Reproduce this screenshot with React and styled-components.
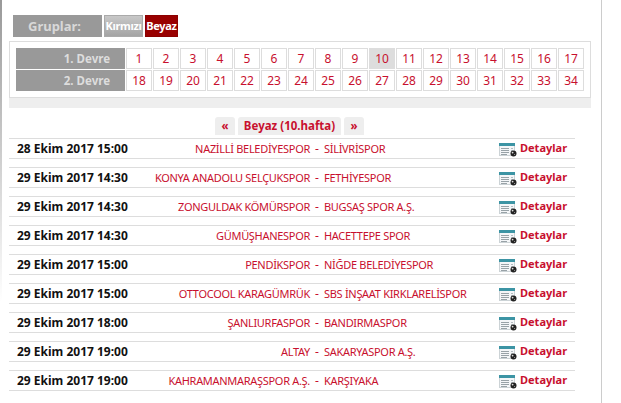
import React from 'react';
import styled, { createGlobalStyle } from 'styled-components';

const Global = createGlobalStyle`
  html, body {
    margin: 0;
    padding: 0;
    background: #fff;
  }
  body {
    width: 621px;
    height: 403px;
    overflow: hidden;
    font-family: "Noto Sans", Tahoma, sans-serif;
    font-size: 12px;
  }
`;

const Page = styled.div`
  width: 602px;
  height: 403px;
  box-sizing: border-box;
  border-right: 1px solid #ccc;
  padding: 15px 0 0 9px;
  background: linear-gradient(to bottom, #999, #fff 75%) no-repeat 0 0 / 2px 100%;
`;

const Groups = styled.div`
  display: flex;
  gap: 2px;
  margin-left: 4px;
  height: 22px;
`;

const GroupLabel = styled.div`
  box-sizing: border-box;
  width: 89px;
  padding-right: 6px;
  background: #999;
  color: #d8d8d8;
  font-weight: bold;
  font-size: 13px;
  line-height: 22px;
  text-align: center;
`;

const GroupButton = styled.a`
  box-sizing: border-box;
  width: ${(p) => p.$width}px;
  border: 1px solid ${(p) => (p.$active ? '#8c0000' : '#aaa')};
  background: ${(p) => (p.$active ? '#990000' : 'linear-gradient(#c8c8c8, #a4a4a4)')};
  color: #fff;
  font-weight: bold;
  font-size: 11px;
  letter-spacing: -0.3px;
  line-height: 20px;
  text-align: center;
  overflow: hidden;
  white-space: nowrap;
`;

const Panel = styled.div`
  box-sizing: border-box;
  width: 582px;
  height: 57px;
  margin-top: 4px;
  border: 1px solid #ddd;
  padding: 6px 0 0 6px;
`;

const Strip = styled.div`
  width: 582px;
  height: 10px;
  background: #eee;
`;

const RoundRow = styled.div`
  display: flex;
  height: 21px;
  margin-bottom: 1px;
`;

const RoundLabel = styled.div`
  box-sizing: border-box;
  width: 109px;
  padding-right: 15px;
  background: #999;
  color: #ddd;
  font-weight: bold;
  font-size: 11.5px;
  line-height: 21px;
  text-align: right;
`;

const RoundCell = styled.a`
  box-sizing: border-box;
  width: 26px;
  margin-left: 1px;
  border: 1px solid #ddd;
  background: ${(p) => (p.$active ? '#ddd' : '#fff')};
  color: #c8102e;
  line-height: 19px;
  text-align: center;
`;

const WeekNav = styled.div`
  display: flex;
  gap: 3px;
  height: 18px;
  margin: 9px 0 3px 206px;
`;

const NavButton = styled.a`
  box-sizing: border-box;
  width: ${(p) => p.$width}px;
  background: #eee;
  border-radius: 3px 3px 0 0;
  color: #c8102e;
  font-weight: bold;
  font-size: 11.5px;
  line-height: 18px;
  text-align: center;
`;

const Fixtures = styled.div`
  display: flex;
  flex-direction: column;
  gap: 8px;
  width: 566px;
`;

const Fixture = styled.div`
  box-sizing: border-box;
  display: flex;
  align-items: center;
  height: 21px;
  border-top: 1px solid #ddd;
  border-bottom: 1px solid #ddd;
`;

const When = styled.div`
  width: 140px;
  padding-left: 8px;
  box-sizing: border-box;
  color: #111;
  font-weight: bold;
  white-space: nowrap;
`;

const Home = styled.div`
  width: 161px;
  text-align: right;
  color: #c8102e;
  font-size: 11px;
  letter-spacing: -0.3px;
  white-space: nowrap;
`;

const Dash = styled.div`
  width: 14px;
  text-align: center;
  color: #c8102e;
`;

const Away = styled.div`
  width: 175px;
  color: #c8102e;
  font-size: 11px;
  letter-spacing: -0.3px;
  white-space: nowrap;
`;

const DetailLink = styled.a`
  display: flex;
  align-items: center;
  gap: 3px;
  color: #c8102e;
  font-weight: bold;
  font-size: 11px;
`;

const DetailLabel = styled.span`
  margin-bottom: 2px;
`;

const IconBox = styled.svg`
  margin-top: 3px;
`;

const DetailIcon = () => (
  <IconBox width="18" height="14" viewBox="0 0 18 14">
    <rect x="0.5" y="0.5" width="15" height="12" fill="#f4f6f8" stroke="#ccd3d6" />
    <rect x="0" y="0" width="16" height="3" fill="#3c94a4" />
    <path d="M2 5.5h8M2 7.5h8M2 9.5h8M2 11.5h6" stroke="#98a2a7" />
    <path d="M12 5.5h2M12 7.5h2" stroke="#b5bdc2" />
    <circle cx="14.5" cy="10.5" r="3" fill="#222" />
    <circle cx="13.6" cy="9.6" r="0.9" fill="#ddd" />
    <circle cx="15.6" cy="11.6" r="0.5" fill="#bbb" />
  </IconBox>
);

const firstRound = Array.from({ length: 17 }, (_, i) => i + 1);
const secondRound = Array.from({ length: 17 }, (_, i) => i + 18);

const matches = [
  ['28 Ekim 2017 15:00', 'NAZİLLİ BELEDİYESPOR', 'SİLİVRİSPOR'],
  ['29 Ekim 2017 14:30', 'KONYA ANADOLU SELÇUKSPOR', 'FETHİYESPOR'],
  ['29 Ekim 2017 14:30', 'ZONGULDAK KÖMÜRSPOR', 'BUGSAŞ SPOR A.Ş.'],
  ['29 Ekim 2017 14:30', 'GÜMÜŞHANESPOR', 'HACETTEPE SPOR'],
  ['29 Ekim 2017 15:00', 'PENDİKSPOR', 'NİĞDE BELEDİYESPOR'],
  ['29 Ekim 2017 15:00', 'OTTOCOOL KARAGÜMRÜK', 'SBS İNŞAAT KIRKLARELİSPOR'],
  ['29 Ekim 2017 18:00', 'ŞANLIURFASPOR', 'BANDIRMASPOR'],
  ['29 Ekim 2017 19:00', 'ALTAY', 'SAKARYASPOR A.Ş.'],
  ['29 Ekim 2017 19:00', 'KAHRAMANMARAŞSPOR A.Ş.', 'KARŞIYAKA'],
];

export default function App() {
  return (
    <Page>
      <Global />
      <Groups>
        <GroupLabel>Gruplar:</GroupLabel>
        <GroupButton $width={39}>Kırmızı</GroupButton>
        <GroupButton $width={33} $active>Beyaz</GroupButton>
      </Groups>
      <Panel>
        <RoundRow>
          <RoundLabel>1. Devre</RoundLabel>
          {firstRound.map((n) => (
            <RoundCell key={n} $active={n === 10}>{n}</RoundCell>
          ))}
        </RoundRow>
        <RoundRow>
          <RoundLabel>2. Devre</RoundLabel>
          {secondRound.map((n) => (
            <RoundCell key={n}>{n}</RoundCell>
          ))}
        </RoundRow>
      </Panel>
      <Strip />
      <WeekNav>
        <NavButton $width={20}>«</NavButton>
        <NavButton $width={103}>Beyaz (10.hafta)</NavButton>
        <NavButton $width={20}>»</NavButton>
      </WeekNav>
      <Fixtures>
        {matches.map(([when, home, away]) => (
          <Fixture key={home}>
            <When>{when}</When>
            <Home>{home}</Home>
            <Dash>-</Dash>
            <Away>{away}</Away>
            <DetailLink>
              <DetailIcon />
              <DetailLabel>Detaylar</DetailLabel>
            </DetailLink>
          </Fixture>
        ))}
      </Fixtures>
    </Page>
  );
}
